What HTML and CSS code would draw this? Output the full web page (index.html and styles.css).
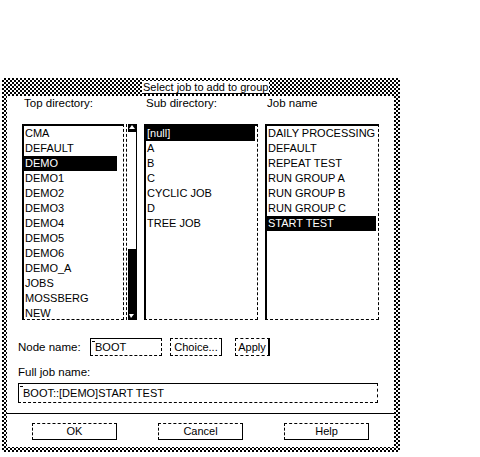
FILE: index.html
```html
<!DOCTYPE html>
<html lang="en">
<head>
  <meta charset="UTF-8">
  <title>Select job to add to group</title>
  <link rel="stylesheet" href="styles.css">
</head>
<body>

<div class="screen">
  <div class="dialog">
    <div class="titlebar"><span class="title">Select job to add to group</span></div>

    <div class="body">
      <div class="lists">
        <div class="col col-top">
          <div class="label">Top directory:</div>
          <div class="listwrap">
            <ul class="list">
              <li>CMA</li>
              <li>DEFAULT</li>
              <li class="sel">DEMO</li>
              <li>DEMO1</li>
              <li>DEMO2</li>
              <li>DEMO3</li>
              <li>DEMO4</li>
              <li>DEMO5</li>
              <li>DEMO6</li>
              <li>DEMO_A</li>
              <li>JOBS</li>
              <li>MOSSBERG</li>
              <li>NEW</li>
            </ul>
            <div class="scrollbar">
              <svg class="arrow" width="8" height="8" viewBox="0 0 8 8">
                <rect width="8" height="8" fill="#000"/>
                <polygon points="4,1 7,5 1,5" fill="#fff"/>
              </svg>
              <div class="trough"><div class="thumb"></div></div>
              <svg class="arrow" width="8" height="9" viewBox="0 0 8 9">
                <rect width="8" height="9" fill="#000"/>
                <polygon points="1,3 6,3 3,7" fill="#fff"/>
              </svg>
            </div>
          </div>
        </div>

        <div class="col">
          <div class="label">Sub directory:</div>
          <ul class="list">
            <li class="sel">[null]</li>
            <li>A</li>
            <li>B</li>
            <li>C</li>
            <li>CYCLIC JOB</li>
            <li>D</li>
            <li>TREE JOB</li>
          </ul>
        </div>

        <div class="col">
          <div class="label">Job name</div>
          <ul class="list">
            <li>DAILY PROCESSING</li>
            <li>DEFAULT</li>
            <li>REPEAT TEST</li>
            <li>RUN GROUP A</li>
            <li>RUN GROUP B</li>
            <li>RUN GROUP C</li>
            <li class="sel">START TEST</li>
          </ul>
        </div>
      </div>

      <div class="node-row">
        <span class="node-label">Node name:</span>
        <div class="field node-field"><span class="caret"></span>BOOT</div>
        <div class="btn choice">Choice...</div>
        <div class="btn apply">Apply</div>
      </div>

      <div class="full-label">Full job name:</div>
      <div class="field full-field"><span class="caret"></span>BOOT::[DEMO]START TEST</div>

      <div class="sep"></div>

      <div class="buttons">
        <div class="btn big">OK</div>
        <div class="btn big">Cancel</div>
        <div class="btn big">Help</div>
      </div>
    </div>
  </div>
</div>

</body>
</html>
```

FILE: styles.css
```css
body {
  margin: 0;
  background: #fff;
  color: #000;
  font-family: "Liberation Sans", Arial, sans-serif;
  font-size: 11px;
}

.screen {
  padding: 78px 0 0 2px;
}

/* checkered motif-style frame */
.dialog {
  width: 387px;
  padding: 0 6px 5px 5px;
  background-color: #fff;
  background-image: conic-gradient(#000 25%, #fff 0 50%, #000 0 75%, #fff 0);
  background-size: 4px 4px;
}

.titlebar {
  height: 18px;
  display: flex;
  align-items: center;
  padding-left: 135px;
}

.title {
  background: #fff;
  line-height: 12px;
  padding: 0 1px;
  border-bottom: 1px solid #000;
}

.body {
  background: #fff;
  height: 351px;
}

.lists {
  display: flex;
  gap: 7px;
  padding-left: 15px;
}

.col {
  width: 114px;
}

.col-top {
  width: 115px;
}

.label {
  font-size: 11.5px;
  line-height: 14px;
  margin-bottom: 14px;
  padding-left: 2px;
}

.listwrap {
  display: flex;
  gap: 2px;
}

.list {
  list-style: none;
  margin: 0;
  padding: 0;
  box-sizing: border-box;
  height: 196px;
  flex: 1;
  overflow: hidden;
  border-left: 2px solid #000;
  border-top: 2px solid #000;
  border-right: 1px dashed #000;
  border-bottom: 1px dashed #000;
}

.list li {
  height: 15px;
  line-height: 15px;
  padding-left: 1px;
  white-space: nowrap;
}

.list li.sel {
  background: #000;
  color: #fff;
  margin-right: 2px;
}

.col-top .list li.sel {
  margin-right: 6px;
}

.scrollbar {
  width: 11px;
  height: 196px;
  box-sizing: border-box;
  padding-left: 1px;
  border-left: 1px dashed #000;
  border-right: 1px solid #000;
  display: flex;
  flex-direction: column;
}

.arrow {
  display: block;
}

.trough {
  flex: 1;
  display: flex;
  flex-direction: column;
  justify-content: flex-end;
}

.thumb {
  height: 62px;
  background: #000;
}

.node-row {
  display: flex;
  align-items: center;
  height: 18px;
  margin-top: 18px;
  padding-left: 11px;
}

.node-label {
  width: 72px;
  font-size: 11.5px;
}

.field {
  box-sizing: border-box;
  border-left: 1px solid #000;
  border-top: 1px solid #000;
  border-right: 1px dashed #000;
  border-bottom: 1px dashed #000;
  padding-left: 3px;
  white-space: nowrap;
}

.caret {
  display: inline-block;
  width: 3px;
  height: 1px;
  background: #000;
  vertical-align: top;
  margin: 2px 0 0 -2px;
}

.node-field {
  width: 72px;
  height: 18px;
  line-height: 16px;
}

.btn {
  box-sizing: border-box;
  border: 1px dashed #000;
  border-right: 1px solid #000;
  border-bottom: 1px solid #000;
  text-align: center;
}

.choice {
  width: 52px;
  height: 18px;
  line-height: 16px;
  margin-left: 8px;
  border-bottom-style: dashed;
}

.apply {
  width: 35px;
  height: 18px;
  line-height: 16px;
  margin-left: 13px;
  border-right-width: 2px;
  border-bottom-style: dashed;
}

.full-label {
  margin-top: 9px;
  font-size: 11.5px;
  line-height: 14px;
  padding-left: 11px;
}

.full-field {
  width: 360px;
  height: 20px;
  line-height: 18px;
  margin: 4px 0 0 11px;
}

.sep {
  margin-top: 10px;
  border-top: 1px solid #000;
}

.buttons {
  display: flex;
  gap: 41px;
  margin-top: 9px;
  padding-left: 25px;
}

.big {
  width: 85px;
  height: 17px;
  line-height: 15px;
}
```
